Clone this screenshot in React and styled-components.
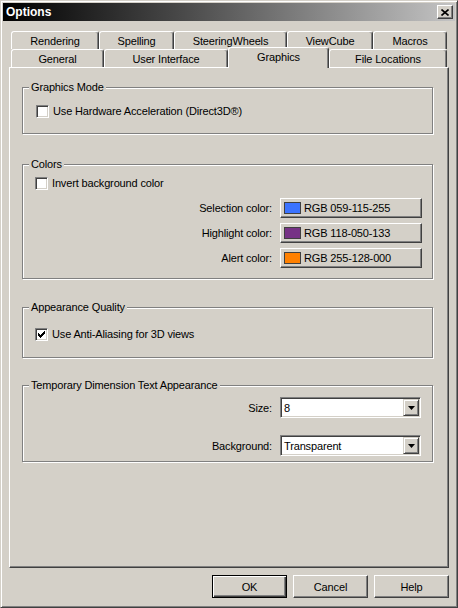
import React from "react";
import styled, { createGlobalStyle } from "styled-components";

const GlobalStyle = createGlobalStyle`
  html, body {
    margin: 0;
    padding: 0;
    background: #d4d0c8;
  }
  body {
    font-family: "Liberation Sans", Arial, sans-serif;
    font-size: 11px;
    letter-spacing: -0.15px;
    color: #000;
  }
  * {
    box-sizing: border-box;
  }
`;

const tabsBack = [
  { label: "Rendering", w: 88 },
  { label: "Spelling", w: 75 },
  { label: "SteeringWheels", w: 113 },
  { label: "ViewCube", w: 86 },
  { label: "Macros", w: 74 },
];

const tabsFront = [
  { label: "General", w: 93 },
  { label: "User Interface", w: 124 },
  { label: "Graphics", w: 101, active: true },
  { label: "File Locations", w: 118 },
];

const colors = [
  { label: "Selection color:", value: "RGB 059-115-255", hex: "#3b73ff" },
  { label: "Highlight color:", value: "RGB 118-050-133", hex: "#763285" },
  { label: "Alert color:", value: "RGB 255-128-000", hex: "#ff8000" },
];

export default function App() {
  return (
    <>
      <GlobalStyle />
      <Dialog>
        <TitleBar>
          <span className="titulo">Options</span>
          <CloseButton>
            <svg width="8" height="7" viewBox="0 0 8 7">
              <path d="M0.5 0.5 L7.5 6.5 M7.5 0.5 L0.5 6.5" stroke="#000" strokeWidth="1.6" />
            </svg>
          </CloseButton>
        </TitleBar>

        <Body>
          <TabRow>
            {tabsBack.map((t) => (
              <Tab key={t.label} $w={t.w}>
                {t.label}
              </Tab>
            ))}
          </TabRow>
          <TabRow $front>
            {tabsFront.map((t) => (
              <Tab key={t.label} $w={t.w} $active={t.active}>
                {t.label}
              </Tab>
            ))}
          </TabRow>

          <Panel>
            <Group $mt={19} $h={47} $pad="17px 10px 0 13px">
              <Legend>Graphics Mode</Legend>
              <CheckRow>
                <CheckBox />
                <span>Use Hardware Acceleration (Direct3D®)</span>
              </CheckRow>
            </Group>

            <Group $mt={30} $h={115} $pad="12px 10px 0 12px">
              <Legend>Colors</Legend>
              <CheckRow>
                <CheckBox />
                <span>Invert background color</span>
              </CheckRow>
              <FormGrid $col={142} $gap={5} $mt={8}>
                {colors.map((c) => (
                  <React.Fragment key={c.label}>
                    <FieldLabel>{c.label}</FieldLabel>
                    <ColorButton>
                      <Swatch $color={c.hex} />
                      <span>{c.value}</span>
                    </ColorButton>
                  </React.Fragment>
                ))}
              </FormGrid>
            </Group>

            <Group $mt={28} $h={51} $pad="20px 10px 0 12px">
              <Legend>Appearance Quality</Legend>
              <CheckRow>
                <CheckBox $checked>
                  <svg width="7" height="7" viewBox="0 0 7 7" shapeRendering="crispEdges">
                    <polygon points="0,2 2,4 7,-1 7,2 2,7 0,5" fill="#000" />
                  </svg>
                </CheckBox>
                <span>Use Anti-Aliasing for 3D views</span>
              </CheckRow>
            </Group>

            <Group $mt={27} $h={77} $pad="11px 11px 0 12px">
              <Legend>Temporary Dimension Text Appearance</Legend>
              <FormGrid $col={141} $gap={17} $mt={0}>
                <FieldLabel>Size:</FieldLabel>
                <Combo>
                  <span>8</span>
                  <DropButton>
                    <svg width="7" height="4" viewBox="0 0 7 4">
                      <polygon points="0,0 7,0 3.5,4" fill="#000" />
                    </svg>
                  </DropButton>
                </Combo>
                <FieldLabel>Background:</FieldLabel>
                <Combo>
                  <span>Transparent</span>
                  <DropButton>
                    <svg width="7" height="4" viewBox="0 0 7 4">
                      <polygon points="0,0 7,0 3.5,4" fill="#000" />
                    </svg>
                  </DropButton>
                </Combo>
              </FormGrid>
            </Group>
          </Panel>

          <Footer>
            <PushButton $default>OK</PushButton>
            <PushButton>Cancel</PushButton>
            <PushButton>Help</PushButton>
          </Footer>
        </Body>
      </Dialog>
    </>
  );
}

const Dialog = styled.div`
  width: 458px;
  height: 608px;
  display: flex;
  flex-direction: column;
  background: #d4d0c8;
  border: 1px solid;
  border-color: #d4d0c8 #404040 #404040 #d4d0c8;
  box-shadow: inset 1px 1px #fff, inset -1px -1px #808080;
  padding: 2px;
`;

const TitleBar = styled.div`
  height: 18px;
  flex: none;
  display: flex;
  align-items: center;
  justify-content: space-between;
  padding: 0 2px 0 3px;
  background: linear-gradient(90deg, #000 0%, #4a4a4a 40%, #c4c4c4 100%);

  .titulo {
    color: #fff;
    font-weight: 700;
    font-size: 12px;
    letter-spacing: 0;
  }
`;

const CloseButton = styled.div`
  width: 16px;
  height: 14px;
  display: flex;
  align-items: center;
  justify-content: center;
  background: #d4d0c8;
  border: 1px solid;
  border-color: #fff #404040 #404040 #fff;
  box-shadow: inset -1px -1px #808080;
`;

const Body = styled.div`
  flex: 1;
  display: flex;
  flex-direction: column;
  padding: 10px 6px 0 6px;
`;

const TabRow = styled.div`
  display: flex;
  align-items: flex-end;
  height: 18px;
  padding: 0 2px;
  position: relative;
  z-index: ${(p) => (p.$front ? 2 : 1)};
`;

const Tab = styled.div`
  flex: none;
  width: ${(p) => p.$w}px;
  height: ${(p) => (p.$active ? 21 : 18)}px;
  margin-bottom: ${(p) => (p.$active ? -1 : 0)}px;
  background: #d4d0c8;
  border: 1px solid;
  border-bottom: none;
  border-color: #fff #404040 transparent #fff;
  border-radius: 3px 3px 0 0;
  box-shadow: inset -1px 0 #808080;
  padding-top: 2px;
  line-height: 15px;
  text-align: center;
  white-space: nowrap;
`;

const Panel = styled.div`
  height: 501px;
  flex: none;
  display: flex;
  flex-direction: column;
  border: 1px solid;
  border-color: #fff #404040 #404040 #fff;
  box-shadow: inset -1px -1px #808080;
  padding: 0 15px 0 12px;
`;

const Group = styled.div`
  position: relative;
  flex: none;
  height: ${(p) => p.$h}px;
  margin-top: ${(p) => p.$mt}px;
  border: 1px solid #808080;
  box-shadow: inset 1px 1px #fff, 1px 1px #fff;
  padding: ${(p) => p.$pad};
`;

const Legend = styled.span`
  position: absolute;
  top: -7px;
  left: 6px;
  padding: 0 2px;
  background: #d4d0c8;
  line-height: 13px;
  white-space: nowrap;
`;

const CheckRow = styled.label`
  display: flex;
  align-items: center;
  gap: 4px;
  line-height: 13px;
`;

const CheckBox = styled.span`
  width: 13px;
  height: 13px;
  flex: none;
  display: flex;
  align-items: center;
  justify-content: center;
  background: #fff;
  border: 1px solid;
  border-color: #808080 #fff #fff #808080;
  box-shadow: inset 1px 1px #404040, inset -1px -1px #d4d0c8;
`;

const FormGrid = styled.div`
  display: grid;
  grid-template-columns: 1fr ${(p) => p.$col}px;
  column-gap: 8px;
  row-gap: ${(p) => p.$gap}px;
  margin-top: ${(p) => p.$mt}px;
  align-items: center;
`;

const FieldLabel = styled.span`
  text-align: right;
  white-space: nowrap;
`;

const ColorButton = styled.div`
  height: 20px;
  display: flex;
  align-items: center;
  gap: 3px;
  padding-left: 3px;
  background: #d4d0c8;
  border: 1px solid;
  border-color: #fff #404040 #404040 #fff;
  box-shadow: inset -1px -1px #808080;
`;

const Swatch = styled.span`
  width: 17px;
  height: 12px;
  flex: none;
  background: ${(p) => p.$color};
  border: 1px solid #404040;
`;

const Combo = styled.div`
  height: 21px;
  display: flex;
  align-items: center;
  justify-content: space-between;
  padding: 2px 2px 2px 5px;
  background: #fff;
  border: 1px solid;
  border-color: #808080 #fff #fff #808080;
  box-shadow: inset 1px 1px #404040, inset -1px -1px #d4d0c8;

  & > span {
    margin-left: -2px;
  }
`;

const DropButton = styled.div`
  width: 16px;
  height: 17px;
  margin-right: -1px;
  display: flex;
  align-items: center;
  justify-content: center;
  background: #d4d0c8;
  border: 1px solid;
  border-color: #d4d0c8 #404040 #404040 #d4d0c8;
  box-shadow: inset 1px 1px #fff, inset -1px -1px #808080;
`;

const Footer = styled.div`
  display: flex;
  justify-content: flex-end;
  gap: 6px;
  margin-top: 7px;
`;

const PushButton = styled.div`
  width: 75px;
  height: 23px;
  display: flex;
  align-items: center;
  justify-content: center;
  background: #d4d0c8;
  border: 1px solid;
  border-color: ${(p) => (p.$default ? "#000" : "#fff #404040 #404040 #fff")};
  box-shadow: ${(p) =>
    p.$default
      ? "inset 1px 1px #fff, inset -1px -1px #404040, inset -2px -2px #808080"
      : "inset -1px -1px #808080"};
`;
